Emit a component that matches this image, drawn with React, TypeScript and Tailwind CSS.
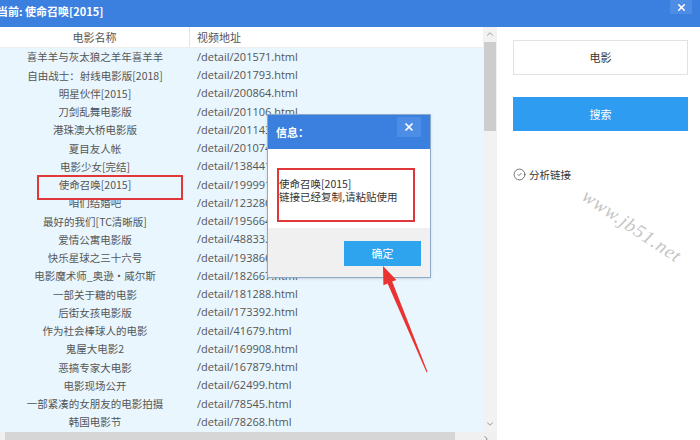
import { X, CircleCheck, ChevronUp, ChevronDown, ChevronRight } from "lucide-react";

const rows = [
  ["喜羊羊与灰太狼之羊年喜羊羊", "/detail/201571.html"],
  ["自由战士：射线电影版[2018]", "/detail/201793.html"],
  ["明星伙伴[2015]", "/detail/200864.html"],
  ["刀剑乱舞电影版", "/detail/201106.html"],
  ["港珠澳大桥电影版", "/detail/201143.html"],
  ["夏目友人帐", "/detail/201074.html"],
  ["电影少女[完结]", "/detail/138441.html"],
  ["使命召唤[2015]", "/detail/199991.html"],
  ["咱们结婚吧", "/detail/123286.html"],
  ["最好的我们[TC清晰版]", "/detail/195664.html"],
  ["爱情公寓电影版", "/detail/48833.html"],
  ["快乐星球之三十六号", "/detail/193866.html"],
  ["电影魔术师_奥逊·威尔斯", "/detail/182667.html"],
  ["一部关于糖的电影", "/detail/181288.html"],
  ["后街女孩电影版", "/detail/173392.html"],
  ["作为社会棒球人的电影", "/detail/41679.html"],
  ["鬼屋大电影2", "/detail/169908.html"],
  ["恶搞专家大电影", "/detail/167879.html"],
  ["电影现场公开", "/detail/62499.html"],
  ["一部紧凑的女朋友的电影拍摄", "/detail/78545.html"],
  ["韩国电影节", "/detail/78268.html"],
];

export default function App() {
  return (
    <div className="relative w-[700px] h-[440px] overflow-hidden bg-white font-['Noto_Sans_CJK_SC',sans-serif] text-[#555]">
      {/* title bar */}
      <div className="flex items-start justify-between h-[27px] bg-[#3b7fdf]">
        <div className="-ml-[3px] mt-[3px] text-[11px] font-bold text-white">当前: 使命召唤[2015]</div>
        <div className="mr-[8px] flex items-center justify-center w-[22px] h-[14px] bg-[#4d8de6]">
          <X size={11} strokeWidth={3.5} className="text-white" />
        </div>
      </div>

      <div className="flex h-[413px]">
        {/* list */}
        <div className="flex flex-col w-[497px]">
          <div className="flex h-[405px]">
            <div className="w-[483px]">
              <div className="flex h-[21px] bg-white border-b border-[#eeeeee] text-[11px] text-[#555]">
                <div className="w-[190px] flex items-center justify-center border-r border-[#e4e4e4]">电影名称</div>
                <div className="flex items-center pl-[7px]">视频地址</div>
              </div>
              <div className="bg-[#e9f6fe] h-[384px]">
                {rows.map(([name, url]) => (
                  <div key={url} className="flex h-[18.25px] items-center">
                    <div className="w-[190px] text-center text-[10.5px] whitespace-nowrap">{name}</div>
                    <div className="pl-[7px] text-[11px] font-['Open_Sans',sans-serif] whitespace-nowrap">{url}</div>
                  </div>
                ))}
              </div>
            </div>
            <div className="w-[14px] flex flex-col items-center bg-[#f2f2f2]">
              <ChevronUp size={10} strokeWidth={2} className="mt-[2px] text-[#888]" />
              <div className="mt-[3px] w-[12px] h-[89px] bg-[#cdcdcd]" />
              <div className="flex-1" />
              <ChevronDown size={10} strokeWidth={2} className="mb-[3px] text-[#888]" />
            </div>
          </div>
          {/* horizontal scrollbar */}
          <div className="flex items-center h-[8px] bg-[#f0f0f0]">
            <div className="ml-[5px] w-[450px] h-full bg-[#d6d6d6]" />
            <div className="flex-1" />
            <ChevronRight size={10} strokeWidth={2} className="mr-[6px] mt-[6px] text-[#777]" />
          </div>
        </div>

        {/* right panel */}
        <div className="flex flex-col pl-[16px] pt-[13px] w-[191px]">
          <div className="flex items-center justify-center h-[35px] w-[175px] border border-[#e2e2e2] text-[11px] text-[#333]">电影</div>
          <div className="mt-[22px] flex items-center justify-center h-[34px] w-[175px] bg-[#2e9cf0] text-[11px] text-white">搜索</div>
          <div className="mt-[36px] flex items-center gap-[3px] text-[10.5px] text-[#333]">
            <CircleCheck size={13} strokeWidth={1.5} className="text-[#555]" />
            <span>分析链接</span>
          </div>
        </div>
      </div>

      {/* highlight in list */}
      <div className="absolute left-[37px] top-[175px] w-[146px] h-[25px] border-2 border-[#e0373a]" />

      {/* dialog */}
      <div className="absolute left-[267px] top-[114px] w-[164px] h-[164px] flex flex-col border border-[#8fa9c9] bg-white shadow-sm">
        <div className="relative flex items-center h-[34px] bg-[#3b7fdf] pl-[8px] text-[11px] font-bold text-white">
          信息：
          <div className="absolute right-[9px] top-[2px] flex items-center justify-center w-[24px] h-[20px] bg-[#4d8de6]">
            <X size={12} strokeWidth={3.5} className="text-white" />
          </div>
        </div>
        <div className="flex-1 px-[9px] pt-[19px]">
          <div className="h-[54px] w-[138px] border-2 border-[#e0373a] pt-[7px] text-[10.5px] leading-[13px] text-[#333]">
            <div>使命召唤[2015]</div>
            <div>链接已经复制,请粘贴使用</div>
          </div>
        </div>
        <div className="flex items-start justify-end h-[49px] bg-[#f0f0f0] pr-[9px] pt-[13px]">
          <div className="flex items-center justify-center w-[77px] h-[25px] bg-[#2ea4ee] text-[11px] text-white">确定</div>
        </div>
      </div>

      {/* arrow */}
      <svg className="absolute left-[370px] top-[260px]" width="70" height="120" viewBox="0 0 70 120">
        <polygon
          points="13,6 26.4,19.9 22.2,21.6 57.5,111.8 56.5,112.2 17.6,23.6 13.4,25.3"
          fill="#ea3330"
        />
      </svg>

      {/* watermark */}
      <div className="absolute left-[584px] top-[180px] origin-left rotate-[34deg] font-['Liberation_Serif',serif] italic text-[19px] tracking-[1px] text-[#c4c4c4]">
        www.jb51.net
      </div>
    </div>
  );
}
